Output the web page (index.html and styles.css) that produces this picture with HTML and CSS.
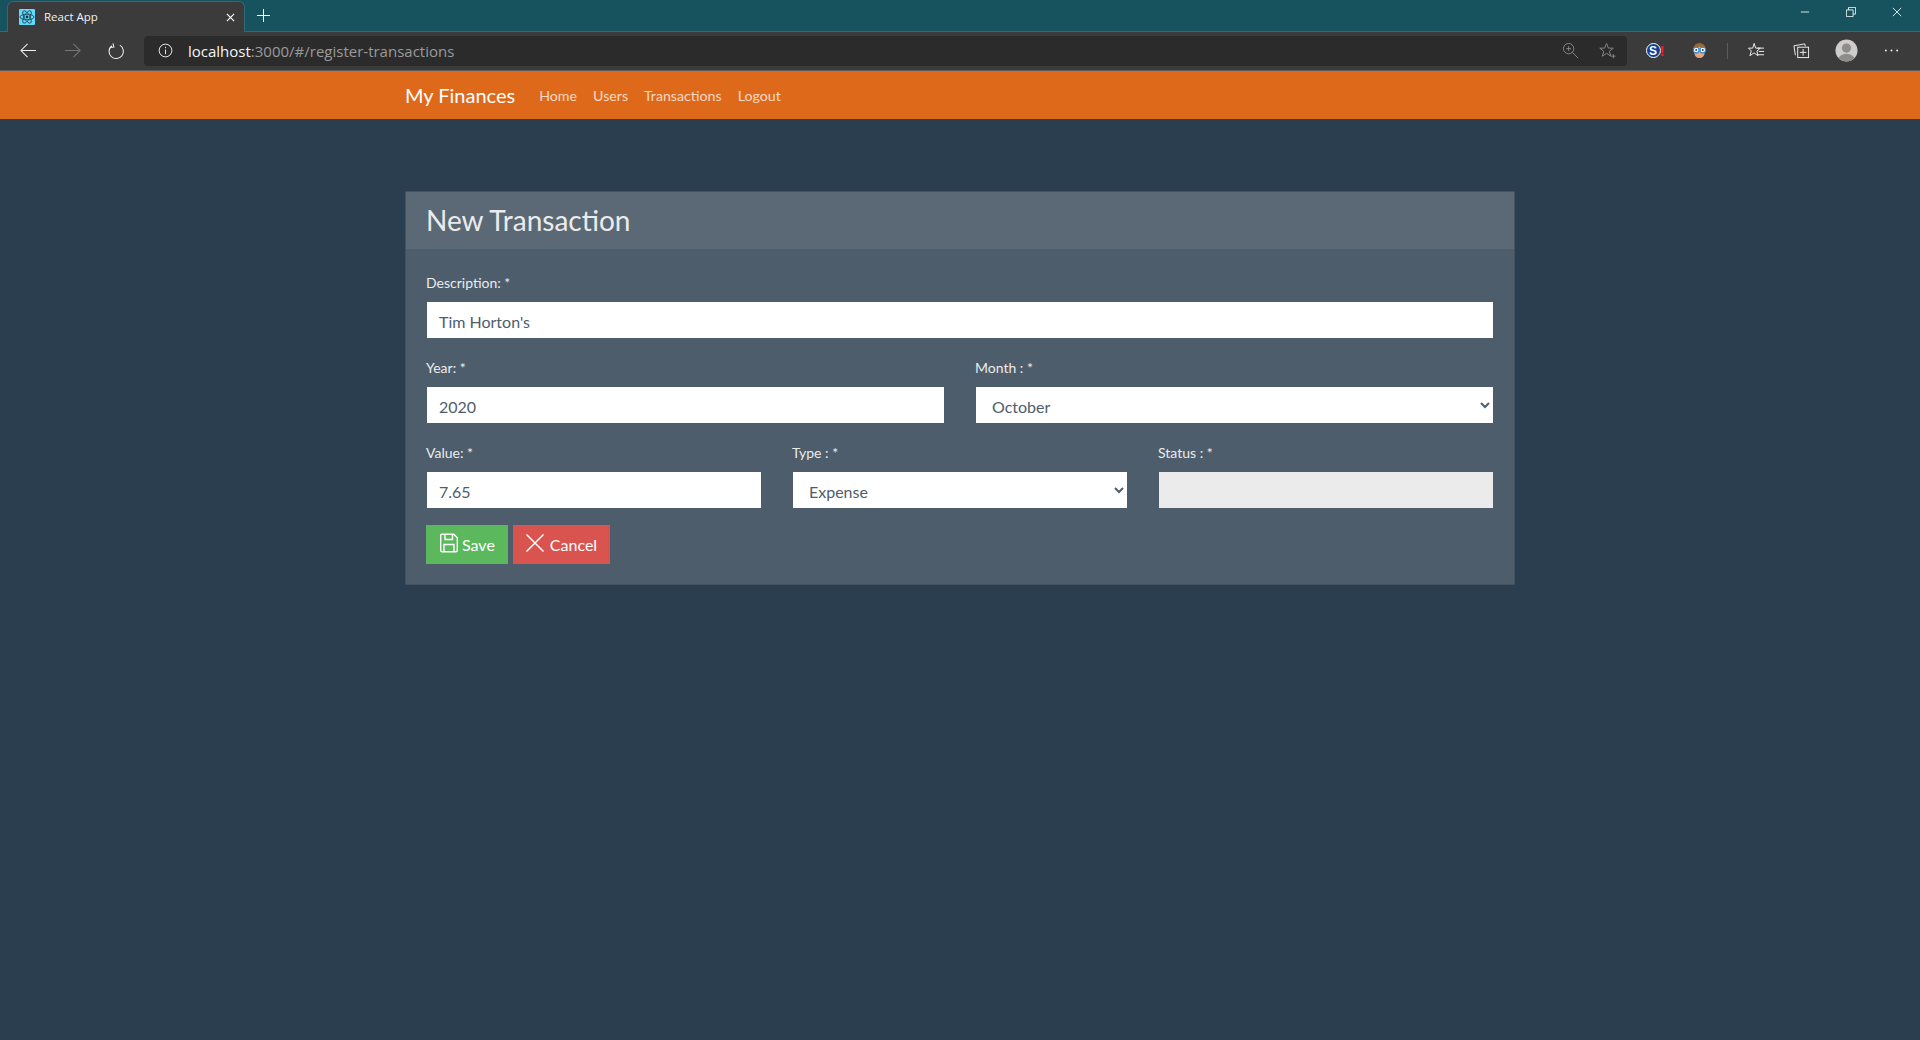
FILE: index.html
```html
<!DOCTYPE html>
<html lang="en">
<head>
    <meta charset="UTF-8">
    <meta name="viewport" content="width=device-width, initial-scale=1.0">
    <title>React App</title>
    <link rel="stylesheet" href="styles.css">
</head>
<body>

    <!-- browser window -->
    <div class="tabstrip">
        <div class="tab">
            <svg class="favicon" viewBox="0 0 16 16">
                <rect width="16" height="16" rx="1" fill="#61dafb"/>
                <g fill="none" stroke="#1d3a4a" stroke-width="0.8">
                    <ellipse cx="8" cy="8" rx="7" ry="2.8"/>
                    <ellipse cx="8" cy="8" rx="7" ry="2.8" transform="rotate(60 8 8)"/>
                    <ellipse cx="8" cy="8" rx="7" ry="2.8" transform="rotate(120 8 8)"/>
                </g>
                <circle cx="8" cy="8" r="1.4" fill="#1d3a4a"/>
            </svg>
            <span class="tab-title">React App</span>
            <svg class="tab-close" viewBox="0 0 10 10"><path d="M1 1l8 8M9 1l-8 8" stroke="#fff" stroke-width="1.3"/></svg>
        </div>
        <svg class="new-tab" viewBox="0 0 14 14"><path d="M7 0v14M0 7h14" stroke="#fff" stroke-width="1.1"/></svg>
        <div class="window-controls">
            <div class="win-btn"><svg viewBox="0 0 12 12"><path d="M1 6h10" stroke="#fff"/></svg></div>
            <div class="win-btn"><svg viewBox="0 0 12 12" fill="none" stroke="#fff"><path d="M.5 3.5h8v8h-8zM3 3.5V.5h8.500v8H8.500"/></svg></div>
            <div class="win-btn"><svg viewBox="0 0 12 12"><path d="M1 1l10 10M11 1L1 11" stroke="#fff"/></svg></div>
        </div>
    </div>

    <div class="toolbar">
        <div class="tool-btn tool-btn-sm"><svg viewBox="0 0 18 18" fill="none" stroke="#f2f2f2" stroke-width="1.1"><path d="M1 9h16M8 2L1 9l7 7"/></svg></div>
        <div class="tool-btn tool-btn-sm"><svg viewBox="0 0 18 18" fill="none" stroke="#777" stroke-width="1.1"><path d="M17 9H1M10 2l7 7-7 7"/></svg></div>
        <div class="tool-btn tool-btn-sm"><svg class="reload-icon" viewBox="0 0 18 18" fill="none" stroke="#f2f2f2" stroke-width="1.1"><path d="M12.500 2.300a7.600 7.600 0 1 1-8.500 .6M5.200 .4L6.200 4.200 2.300 4.800"/></svg></div>
        <div class="addressbar">
            <svg class="info-icon" viewBox="0 0 16 16" fill="none" stroke="#f2f2f2"><circle cx="8" cy="8" r="6.800"/><path d="M8 7v5M8 4v1.500"/></svg>
            <span class="url"><span class="url-host">localhost</span>:3000/#/register-transactions</span>
            <svg class="zoom-icon" viewBox="0 0 18 18" fill="none" stroke="#8a8a8a"><circle cx="7" cy="7" r="5.500"/><path d="M11 11l6 6M7 4.500v5M4.500 7h5"/></svg>
            <svg class="fav-add-icon" viewBox="0 0 18 18" fill="none" stroke="#8a8a8a"><path d="M8 1.500l2 5h5.200l-4.200 3.300 1.500 5.200L8 12l-4.500 3 1.500-5.200L.8 6.500H6zM13 15h4.500M15.200 12.800v4.500"/></svg>
        </div>
        <div class="tool-btn tool-btn-sm ext-s"><span class="ext-s-letter">S</span><span class="ext-s-mark">!</span></div>
        <div class="tool-btn tool-btn-sm">
            <svg viewBox="0 0 18 18">
                <circle cx="9" cy="7.500" r="6.500" fill="#9a6a34"/>
                <ellipse cx="9" cy="11" rx="5.500" ry="6" fill="#e4a77c"/>
                <circle cx="5.500" cy="8.500" r="3" fill="#fff" stroke="#2a86d8" stroke-width="1.200"/>
                <circle cx="12.500" cy="8.500" r="3" fill="#fff" stroke="#2a86d8" stroke-width="1.200"/>
                <circle cx="5.500" cy="8.500" r="1" fill="#234"/>
                <circle cx="12.500" cy="8.500" r="1" fill="#234"/>
            </svg>
        </div>
        <div class="tool-divider"></div>
        <div class="tool-btn"><svg viewBox="0 0 18 18" fill="none" stroke="#f2f2f2"><path d="M6.500 1.500l1.600 5H13L9.500 9.500l1 5-4-3-4.500 3 1.500-5L.5 6.500h4.500zM10 6.500h7M11.500 10h5.500M10.500 13.500h6.500"/></svg></div>
        <div class="tool-btn"><svg viewBox="0 0 18 18" fill="none" stroke="#f2f2f2"><path d="M2.500 14L1 4 12.500 2l.5 2.500"/><rect x="5" y="5.500" width="11.500" height="11"/><path d="M10.700 7.500v7M7.200 11h7"/></svg></div>
        <div class="tool-btn">
            <svg class="profile-icon" viewBox="0 0 24 24">
                <clipPath id="profile-clip"><circle cx="12" cy="12" r="11.500"/></clipPath>
                <circle cx="12" cy="12" r="11.500" fill="#cfcdcb"/>
                <g clip-path="url(#profile-clip)" fill="#8f8d8b">
                    <circle cx="12" cy="9.500" r="4.800"/>
                    <ellipse cx="12" cy="21.500" rx="8.500" ry="6"/>
                </g>
            </svg>
        </div>
        <div class="tool-btn"><svg viewBox="0 0 18 18" fill="#f2f2f2"><circle cx="3" cy="9" r="1"/><circle cx="9" cy="9" r="1"/><circle cx="15" cy="9" r="1"/></svg></div>
    </div>

    <!-- page -->
    <nav class="navbar">
        <div class="container navbar-inner">
            <a class="navbar-brand" href="#/home">My Finances</a>
            <ul class="nav-list">
                <li><a class="nav-link" href="#/home">Home</a></li>
                <li><a class="nav-link" href="#/users">Users</a></li>
                <li><a class="nav-link" href="#/transactions">Transactions</a></li>
                <li><a class="nav-link" href="#/login">Logout</a></li>
            </ul>
        </div>
    </nav>

    <main class="container">
        <div class="card">
            <h3 class="card-header">New Transaction</h3>
            <div class="card-body">
                <div class="form-row">
                    <div class="form-group">
                        <label for="description">Description: *</label>
                        <input id="description" class="form-control" type="text" value="Tim Horton's">
                    </div>
                </div>
                <div class="form-row">
                    <div class="form-group">
                        <label for="year">Year: *</label>
                        <input id="year" class="form-control" type="text" value="2020">
                    </div>
                    <div class="form-group">
                        <label for="month">Month : *</label>
                        <select id="month" class="form-control">
                            <option>September</option>
                            <option selected>October</option>
                            <option>November</option>
                        </select>
                    </div>
                </div>
                <div class="form-row">
                    <div class="form-group">
                        <label for="value">Value: *</label>
                        <input id="value" class="form-control" type="text" value="7.65">
                    </div>
                    <div class="form-group">
                        <label for="type">Type : *</label>
                        <select id="type" class="form-control">
                            <option>Income</option>
                            <option selected>Expense</option>
                        </select>
                    </div>
                    <div class="form-group">
                        <label for="status">Status : *</label>
                        <input id="status" class="form-control" type="text" disabled>
                    </div>
                </div>
                <div class="actions">
                    <button class="btn btn-success" type="button">
                        <svg class="btn-icon" viewBox="0 0 20 20" fill="none" stroke="#fff" stroke-width="1.400"><path d="M2.700 1.200h12l3.600 3.600v12.500a1.500 1.500 0 0 1-1.500 1.500H3.200a1.500 1.500 0 0 1-1.500-1.500V2.200a1 1 0 0 1 1-1zM6 1.200v5.300h7.500V1.200M5 18.800v-7.300h10v7.300"/></svg>
                        Save
                    </button>
                    <button class="btn btn-danger" type="button">
                        <svg class="btn-icon" viewBox="0 0 20 20" fill="none" stroke="#fff" stroke-width="1.500"><path d="M1.500 1.500l17 17M18.500 1.500l-17 17"/></svg>
                        Cancel
                    </button>
                </div>
            </div>
        </div>
    </main>

</body>
</html>
```

FILE: styles.css
```css
* {
    box-sizing: border-box;
}
body {
    margin: 0;
    min-height: 1040px;
    font-family: Lato, "Open Sans", sans-serif;
    font-size: 15px;
    line-height: 1.5;
    color: #ebebeb;
    background-color: #2b3e50;
}

/* browser chrome */
.tabstrip {
    display: flex;
    align-items: flex-end;
    height: 32px;
    padding-left: 7px;
    background: #17535f;
    border-bottom: 1px solid #2e6a78;
}
.tab {
    display: flex;
    align-items: center;
    width: 238px;
    height: 31px;
    margin-bottom: -1px;
    padding: 0 9px 0 11px;
    background: #3b3b3b;
    border: 1px solid #2e6a78;
    border-bottom: none;
    border-radius: 6px 6px 0 0;
}
.favicon {
    width: 16px;
    height: 16px;
}
.tab-title {
    flex: 1;
    margin-left: 9px;
    font-family: "Open Sans", sans-serif;
    font-size: 11.500px;
    color: #f2f2f2;
}
.tab-close {
    width: 9px;
    height: 9px;
}
.new-tab {
    width: 13px;
    height: 13px;
    margin: 0 0 9px 12px;
}
.window-controls {
    display: flex;
    align-self: flex-start;
    margin-left: auto;
}
.win-btn {
    display: flex;
    align-items: center;
    justify-content: center;
    width: 46px;
    height: 23px;
}
.win-btn svg {
    width: 10px;
    height: 10px;
}
.toolbar {
    display: flex;
    align-items: center;
    height: 39px;
    padding: 0 6px 1px 6px;
    background: #3b3b3b;
    border-bottom: 1px solid #5c5c5c;
}
.tool-btn {
    display: flex;
    flex: none;
    align-items: center;
    justify-content: center;
    width: 45px;
    height: 30px;
}
.tool-btn-sm {
    width: 44px;
}
.tool-btn svg {
    width: 17px;
    height: 17px;
}
.tool-btn svg.profile-icon {
    width: 23px;
    height: 23px;
}
.tool-btn svg.reload-icon {
    margin-top: 1px;
}
.tool-divider {
    flex: none;
    width: 1px;
    height: 16px;
    margin: 0 6px;
    background: #5c5c5c;
}
.addressbar {
    display: flex;
    flex: 1;
    align-items: center;
    height: 30px;
    margin: 0 6px;
    padding: 0 11px 0 14px;
    background: #2b2b2b;
    border-radius: 4px;
}
.info-icon {
    width: 15px;
    height: 15px;
}
.url {
    flex: 1;
    margin: 1px 0 0 15px;
    font-family: "Open Sans", sans-serif;
    font-size: 15px;
    color: #9a9a9a;
}
.url-host {
    color: #f5f5f5;
}
.zoom-icon,
.fav-add-icon {
    width: 17px;
    height: 17px;
}
.fav-add-icon {
    margin-left: 20px;
}
.ext-s {
    font-family: "Liberation Sans", sans-serif;
    font-weight: bold;
}
.ext-s-letter {
    display: flex;
    align-items: center;
    justify-content: center;
    width: 15px;
    height: 15px;
    font-size: 12px;
    line-height: 1;
    color: #fff;
    background: #0f3f97;
    border: 1px solid #fff;
    border-radius: 50%;
}
.ext-s-mark {
    margin-left: -1px;
    font-size: 15px;
    line-height: 1;
    color: #e8202a;
}

/* page */
.container {
    width: 1140px;
    margin: 0 auto;
    padding: 0 15px;
}
.navbar {
    height: 48px;
    background: #df691a;
}
.navbar-inner {
    display: flex;
    align-items: center;
    height: 48px;
}
.navbar-brand {
    margin-right: 16px;
    font-size: 20px;
    color: #fff;
    text-decoration: none;
}
.nav-list {
    display: flex;
    margin: 1px 0 0;
    padding: 0;
    list-style: none;
}
.nav-link {
    display: block;
    padding: 8px;
    font-size: 14.200px;
    color: rgba(255, 255, 255, 0.75);
    text-decoration: none;
}
.card {
    margin-top: 72px;
    background: #4e5d6c;
    border: 1px solid rgba(0, 0, 0, 0.125);
}
.card-header {
    height: 57px;
    margin: 0;
    padding: 12px 20px;
    font-size: 28px;
    font-weight: 400;
    line-height: 1.2;
    background: rgba(255, 255, 255, 0.075);
}
.card-body {
    padding: 21px 20px 20px;
}
.form-row {
    display: flex;
    gap: 30px;
}
.form-group {
    flex: 1;
    min-width: 0;
    margin-bottom: 16px;
}
label {
    display: block;
    margin-bottom: 7px;
    padding-top: 1px;
    font-size: 14px;
    line-height: 23px;
}
.form-control {
    display: block;
    width: 100%;
    height: 38px;
    padding: 7px 12px 5px;
    font-family: inherit;
    font-size: 16px;
    color: #4e5d6c;
    background-color: #fff;
    background-clip: padding-box;
    border: 1px solid transparent;
    border-radius: 0;
    outline: none;
}
.form-control:disabled {
    background-color: #ebebeb;
}
.actions {
    display: flex;
    gap: 5px;
}
.btn {
    display: flex;
    align-items: center;
    height: 39px;
    padding: 0 12px;
    font-family: inherit;
    font-size: 16px;
    color: #fff;
    border: 1px solid transparent;
    border-radius: 0;
}
.btn-success {
    background: #5cb85c;
}
.btn-danger {
    background: #d9534f;
}
.btn-icon {
    width: 20px;
    height: 20px;
    margin: -3px 3px 0 0;
}
.btn-danger .btn-icon {
    margin-left: -1px;
    margin-right: 5px;
}
```
